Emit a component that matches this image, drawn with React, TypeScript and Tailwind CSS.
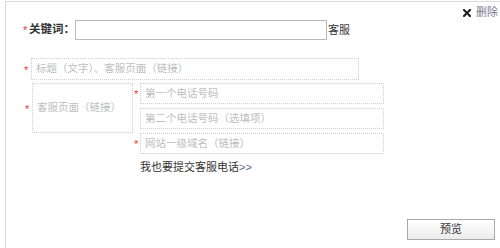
import React from "react";

const font = { fontFamily: '"Liberation Sans", "Noto Sans CJK SC", sans-serif' };

function Star({ className = "" }: { className?: string }) {
  return <span className={`text-[#e4393c] text-[11px] leading-none w-[6px] inline-block ${className}`}>*</span>;
}

function Field({ text, className = "" }: { text: string; className?: string }) {
  return (
    <div
      className={`border border-dotted border-[#cfcfcf] text-[#bdbdbd] text-[10.5px] pl-[4px] flex items-center ${className}`}
    >
      {text}
    </div>
  );
}

export default function App() {
  return (
    <div className="w-[500px] h-[248px] bg-white pt-[1px]" style={font}>
      <div className="ml-[5px] h-[247px] border-l border-t border-[#dadada] flex flex-col">
        <div className="flex justify-end items-center h-[16px] pt-[5px] pr-[2px] text-[11px] leading-[11px]">
          <svg width="8" height="8" viewBox="0 0 8 8" className="mr-[5px]">
            <path d="M1 1 L7 7 M7 1 L1 7" stroke="#222" strokeWidth="2.2" strokeLinecap="square" />
          </svg>
          <span className="text-[#7d7891]">删除</span>
        </div>
        <div className="flex items-center h-[20px] mt-[2px] pl-[17px]">
          <Star />
          <span className="text-[11.5px] font-bold text-[#333] w-[46px]">关键词：</span>
          <div className="w-[252px] h-[20px] border border-[#b9b9b9]" />
          <span className="text-[11px] text-[#333] ml-[1px]">客服</span>
        </div>
        <div className="flex items-center mt-[18px] pl-[18px]">
          <Star className="mt-[2px]" />
          <Field text="标题（文字）、客服页面（链接）" className="w-[328px] h-[22px] ml-[1px]" />
        </div>
        <div className="flex mt-[3px] pl-[19px]">
          <div className="flex items-center h-[50px]">
            <Star className="mt-[2px]" />
          </div>
          <Field text="客服页面（链接）" className="w-[101px] h-[50px] ml-[1px] pl-[2px]" />
          <div className="flex flex-col ml-[1px]">
            <div className="flex items-center gap-0">
              <Star className="mt-[2px]" />
              <Field text="第一个电话号码" className="w-[244px] h-[21px]" />
            </div>
            <div className="flex items-center mt-[4px]">
              <span className="w-[6px]" />
              <Field text="第二个电话号码（选填项）" className="w-[244px] h-[21px]" />
            </div>
            <div className="flex items-center mt-[4px]">
              <Star className="mt-[2px]" />
              <Field text="网站一级域名（链接）" className="w-[244px] h-[21px]" />
            </div>
            <div className="mt-[7px] ml-[6px] text-[11px] leading-[12px] text-[#333]">
              我也要提交客服电话<span className="text-[#5a6b8c]">&gt;&gt;</span>
            </div>
          </div>
        </div>
        <div className="mt-auto flex justify-end pr-[5px] pb-[8px]">
          <button className="w-[88px] h-[21px] border border-[#a9a9a9] bg-gradient-to-b from-white to-[#ececec] text-[11px] text-[#333] flex items-center justify-center">
            预览
          </button>
        </div>
      </div>
    </div>
  );
}
